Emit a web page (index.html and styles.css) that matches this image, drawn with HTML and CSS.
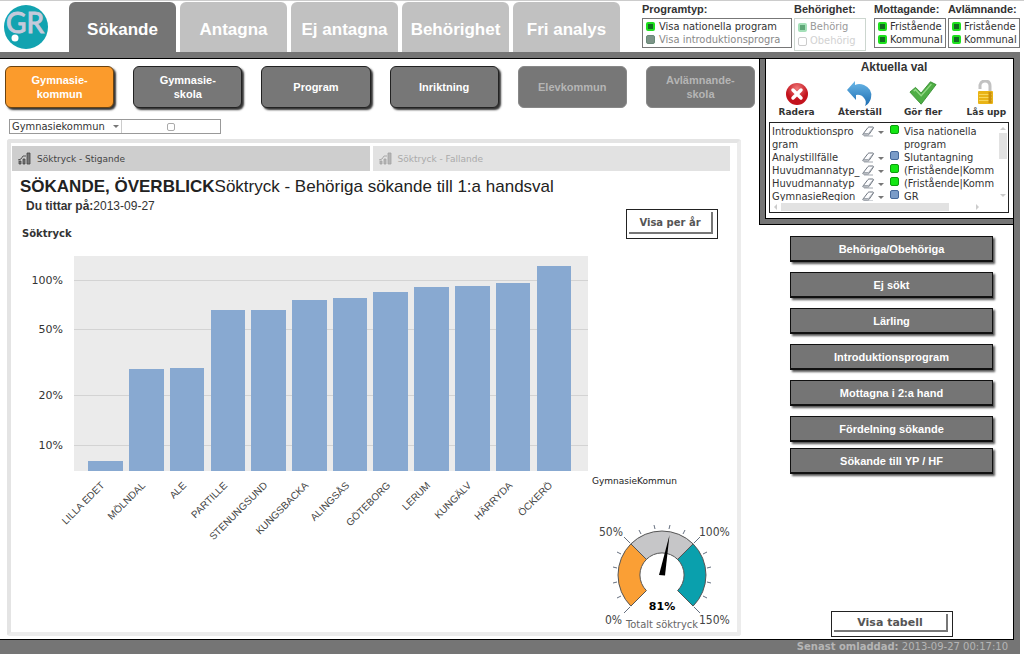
FILE: index.html
```html
<!DOCTYPE html>
<html lang="sv">
<head>
<meta charset="utf-8">
<title>Sökande, överblick</title>
<link rel="stylesheet" href="styles.css">
</head>
<body>
<svg class="defs" aria-hidden="true">
  <defs>
    <symbol id="eraser" viewBox="0 0 14 12">
      <path d="M2 9L7 2.500Q7.500 2 8.300 2H12Q13 2.300 12.300 3.300L8 9.500Q7.500 10 6.800 10H2.500Q1.300 10 2 9Z" fill="#fdfdff" stroke="#6f7680"/>
      <path d="M2 8.500H7.500L12.500 2.500M3 11H12" fill="none" stroke="#8c939c" stroke-width=".8"/>
    </symbol>
    <symbol id="minichart" viewBox="0 0 13 13">
      <path d="M1 12V9h2v3zM5 12V7h2v5zM9 12V1h3v11z" fill="#777" stroke="#444" stroke-width=".8"/>
      <path d="M0 8L3 7L5 4L8 4" stroke="#555" fill="none"/>
    </symbol>
  </defs>
</svg>
<div class="app">
  <header class="header">
    <svg class="logo" viewBox="0 0 50 50" role="img" aria-label="GR">
      <circle cx="26" cy="26" r="22" fill="#12a3b0"/>
      <text class="logo-text" x="6" y="32">GR</text>
      <circle cx="15" cy="37" r="3.500" fill="#fff"/>
    </svg>
    <nav class="tabs">
      <button class="tab tab-active">Sökande</button>
      <button class="tab">Antagna</button>
      <button class="tab">Ej antagna</button>
      <button class="tab">Behörighet</button>
      <button class="tab">Fri analys</button>
    </nav>
    <div class="filters">
      <fieldset class="filter filter-wide">
        <legend>Programtyp:</legend>
        <div class="options">
          <label><input type="checkbox" checked>Visa nationella program</label>
          <label class="muted"><input type="checkbox">Visa introduktionsprogra</label>
        </div>
      </fieldset>
      <fieldset class="filter filter-faded">
        <legend>Behörighet:</legend>
        <div class="options">
          <label><input type="checkbox" checked>Behörig</label>
          <label class="ghost"><input type="checkbox">Obehörig</label>
        </div>
      </fieldset>
      <fieldset class="filter">
        <legend>Mottagande:</legend>
        <div class="options">
          <label><input type="checkbox" checked>Fristående</label>
          <label><input type="checkbox" checked>Kommunal</label>
        </div>
      </fieldset>
      <fieldset class="filter">
        <legend>Avlämnande:</legend>
        <div class="options">
          <label><input type="checkbox" checked>Fristående</label>
          <label><input type="checkbox" checked>Kommunal</label>
        </div>
      </fieldset>
    </div>
  </header>

  <div class="frame">
    <div class="content">
      <main class="main">
        <nav class="views">
          <button class="view view-active">Gymnasie-<br>kommun</button>
          <button class="view">Gymnasie-<br>skola</button>
          <button class="view">Program</button>
          <button class="view">Inriktning</button>
          <button class="view" disabled>Elevkommun</button>
          <button class="view" disabled>Avlämnande-<br>skola</button>
        </nav>
        <div class="dimension">
          <button class="dimension-name">Gymnasiekommun <span class="arrow"></span></button>
          <span class="dimension-value"><input type="checkbox" aria-label="Gymnasiekommun"></span>
        </div>
        <section class="panel">
          <div class="charttabs">
            <button class="charttab charttab-active"><svg class="mini"><use href="#minichart"/></svg>Söktryck - Stigande</button>
            <button class="charttab"><svg class="mini"><use href="#minichart"/></svg>Söktryck - Fallande</button>
          </div>
          <h1 class="title"><b>SÖKANDE, ÖVERBLICK</b>Söktryck - Behöriga sökande till 1:a handsval</h1>
          <p class="date"><b>Du tittar på:</b>2013-09-27</p>
          <div class="body">
            <div class="chartbox">
              <h2 class="measure">Söktryck</h2>
              <svg class="chart" viewBox="12 244 576 300" role="img" aria-label="Söktryck per kommun">
                <rect x="74" y="256" width="514" height="215" fill="#ebebeb"/>
                <path d="M74 280.500H588M74 329.500H588M74 395.500H588M74 445.500H588" stroke="#d3d3d3"/>
                <g class="axis">
                  <text x="63" y="284">100%</text>
                  <text x="63" y="333">50%</text>
                  <text x="63" y="399">20%</text>
                  <text x="63" y="449">10%</text>
                </g>
                <g fill="#88a9d1">
                  <rect x="88" y="461" width="35" height="10"/>
                  <rect x="129" y="369" width="35" height="102"/>
                  <rect x="170" y="368" width="34" height="103"/>
                  <rect x="211" y="310" width="34" height="161"/>
                  <rect x="251" y="310" width="35" height="161"/>
                  <rect x="292" y="300" width="35" height="171"/>
                  <rect x="333" y="298" width="34" height="173"/>
                  <rect x="373" y="292" width="35" height="179"/>
                  <rect x="414" y="287" width="35" height="184"/>
                  <rect x="455" y="286" width="35" height="185"/>
                  <rect x="496" y="283" width="34" height="188"/>
                  <rect x="537" y="266" width="34" height="205"/>
                </g>
                <g class="names">
                  <text transform="translate(105 486) rotate(-45)">LILLA EDET</text>
                  <text transform="translate(146 486) rotate(-45)">MÖLNDAL</text>
                  <text transform="translate(187 486) rotate(-45)">ALE</text>
                  <text transform="translate(228 486) rotate(-45)">PARTILLE</text>
                  <text transform="translate(268 486) rotate(-45)">STENUNGSUND</text>
                  <text transform="translate(309 486) rotate(-45)">KUNGSBACKA</text>
                  <text transform="translate(350 486) rotate(-45)">ALINGSÅS</text>
                  <text transform="translate(391 486) rotate(-45)">GÖTEBORG</text>
                  <text transform="translate(431 486) rotate(-45)">LERUM</text>
                  <text transform="translate(472 486) rotate(-45)">KUNGÄLV</text>
                  <text transform="translate(513 486) rotate(-45)">HÄRRYDA</text>
                  <text transform="translate(553 486) rotate(-45)">ÖCKERÖ</text>
                </g>
              </svg>
            </div>
            <aside class="side">
              <button class="plain plain-year"><span>Visa per år</span></button>
              <p class="dimlabel">GymnasieKommun</p>
              <svg class="gauge" viewBox="588 520 146 112" role="img" aria-label="Totalt söktryck 81%">
                <g stroke="#555" stroke-width="1">
                  <path d="M630.900 606.100A44 44 0 0 1 630.900 543.900L646.400 559.400A22 22 0 0 0 646.400 590.600Z" fill="#fa9f35"/>
                  <path d="M630.900 543.900A44 44 0 0 1 693.100 543.900L677.600 559.400A22 22 0 0 0 646.400 559.400Z" fill="#c6c6c8"/>
                  <path d="M693.100 543.900A44 44 0 0 1 693.100 606.100L677.600 590.600A22 22 0 0 0 677.600 559.400Z" fill="#0aa0ad"/>
                </g>
                <path d="M630 543l-6-6M694 543l6-6M630 607l-6 6M694 607l6 6M617 552l4 2M613 567l4 1M613 583l4-1M617 598l4-2M639 530l2 4M654 525l1 4M670 525l-1 4M685 530l-2 4M707 552l-4 2M711 567l-4 1M711 583l-4-1M707 598l-4-2" stroke="#667080" fill="none"/>
                <path d="M659 575L669.500 535L665 575.500Z" fill="#000"/>
                <g class="scale">
                  <text x="599" y="536">50%</text>
                  <text x="699" y="536">100%</text>
                  <text x="605" y="624">0%</text>
                  <text x="699" y="624">150%</text>
                </g>
                <text class="reading" x="662" y="610">81%</text>
                <text class="caption" x="662" y="628">Totalt söktryck</text>
              </svg>
            </aside>
          </div>
        </section>
      </main>

      <aside class="sidebar">
        <section class="current">
          <div class="current-inner">
            <h2>Aktuella val</h2>
            <div class="actions">
              <button class="action">
                <svg viewBox="0 0 26 26"><defs><radialGradient id="red" cy=".25"><stop stop-color="#f07a7a"/><stop offset="1" stop-color="#c3131d"/></radialGradient></defs><circle cx="13" cy="14" r="11" fill="url(#red)"/><path d="M9 10l8 8M17 10l-8 8" stroke="#fff" stroke-width="3.500" stroke-linecap="round"/></svg>
                Radera
              </button>
              <button class="action">
                <svg viewBox="0 0 26 26"><defs><linearGradient id="blue" x2="0" y2="1"><stop stop-color="#6bb8e8"/><stop offset="1" stop-color="#1b6bb0"/></linearGradient></defs><path d="M0 10L8 1V5Q12 3 17 5Q26 9 24 18Q23 23 18 26Q20 21 17 18Q14 14 9 15L9 20Z" fill="url(#blue)"/></svg>
                Återställ
              </button>
              <button class="action">
                <svg viewBox="0 0 30 26"><path d="M1 12L7 7L13 13L23 1L29 4L13 25Z" fill="#4fae45" stroke="#3b9136"/><path d="M5 11L7 9.500L13 16L24 3.500" stroke="#92d884" stroke-width="1.500" fill="none"/></svg>
                Gör fler
              </button>
              <button class="action">
                <svg viewBox="0 0 26 26"><path d="M7 9V5Q8 1 12 1Q17 1 17 6V12" fill="none" stroke="#c2c2c2" stroke-width="3"/><rect x="5" y="11" width="15" height="13" rx="1" fill="#e9b416"/><path d="M6 14.500H19M6 17.500H19M6 20.500H19" stroke="#f8d75a"/><path d="M17 12V23" stroke="#c98f0c" stroke-width="3"/></svg>
                Lås upp
              </button>
            </div>
            <div class="listbox">
              <div class="rows">
                <table>
                  <tr><td class="name">Introduktionspro<br>gram</td><td><svg class="eraser"><use href="#eraser"/></svg></td><td><span class="arrow"></span></td><td><span class="dot dot-green"></span></td><td class="value">Visa nationella<br>program</td></tr>
                  <tr><td class="name">Analystillfälle</td><td><svg class="eraser"><use href="#eraser"/></svg></td><td><span class="arrow"></span></td><td><span class="dot"></span></td><td class="value">Slutantagning</td></tr>
                  <tr><td class="name">Huvudmannatyp_</td><td><svg class="eraser"><use href="#eraser"/></svg></td><td><span class="arrow"></span></td><td><span class="dot dot-green"></span></td><td class="value">(Fristående|Komm</td></tr>
                  <tr><td class="name">Huvudmannatyp</td><td><svg class="eraser"><use href="#eraser"/></svg></td><td><span class="arrow"></span></td><td><span class="dot dot-green"></span></td><td class="value">(Fristående|Komm</td></tr>
                  <tr><td class="name">GymnasieRegion</td><td><svg class="eraser"><use href="#eraser"/></svg></td><td><span class="arrow"></span></td><td><span class="dot"></span></td><td class="value">GR</td></tr>
                </table>
              </div>
              <div class="vscroll"><i class="up"></i><b></b><i class="down"></i></div>
              <div class="hscroll"><i class="left"></i><b></b><i class="right"></i></div>
            </div>
          </div>
        </section>
        <div class="links">
          <button class="link">Behöriga/Obehöriga</button>
          <button class="link">Ej sökt</button>
          <button class="link">Lärling</button>
          <button class="link">Introduktionsprogram</button>
          <button class="link">Mottagna i 2:a hand</button>
          <div class="linkpair">
            <button class="link">Fördelning sökande</button>
            <button class="link">Sökande till YP / HF</button>
          </div>
        </div>
        <button class="plain plain-wide"><span>Visa tabell</span></button>
      </aside>
    </div>
    <footer class="footer"><b>Senast omladdad:</b> 2013-09-27 00:17:10</footer>
  </div>
</div>
</body>
</html>
```
FILE: styles.css
```css
* { box-sizing: border-box; }
body {
  margin: 0;
  background: #fff;
  color: #333;
  font-family: "Liberation Sans", Arial, sans-serif;
  font-size: 12px;
}
button { font: inherit; color: inherit; margin: 0; padding: 0; border: 0; background: none; }
h1, h2, p { margin: 0; font-weight: normal; }
.defs { display: block; width: 0; height: 0; }
.app { display: flex; flex-direction: column; min-height: 100vh; padding-right: 4px; border-top: 1px solid #ccc; }

.header { display: flex; height: 51px; }
.logo { width: 50px; height: 50px; margin-right: 19px; flex: none; }
.logo-text { font: 28px Lato, "Open Sans", sans-serif; fill: #c5cadb; stroke: #c5cadb; stroke-width: 1px; }
.tabs { display: flex; gap: 4px; flex: 0 1 551px; padding-top: 1px; }
.tab {
  flex: 1;
  border-radius: 6px 6px 0 0;
  background: #c1c1c1;
  color: #fff;
  font-size: 17px;
  font-weight: bold;
  padding-top: 6px;
  white-space: nowrap;
}
.tab-active { background: #757575; }
.filters { display: flex; gap: 2px; margin-left: auto; }
.filter { border: 0; margin: 0; padding: 0; width: 72px; min-width: 0; }
.filter-wide { width: 150px; }
.filter-faded { margin-right: 6px; }
.filter legend { padding: 0; height: 17px; line-height: 16px; font-weight: bold; font-size: 11px; white-space: nowrap; }
.options { border: 1px solid #777; height: 30px; padding: 1px 0 0 3px; overflow: hidden; font: 11px/13px "DejaVu Sans Condensed", "Noto Sans", sans-serif; }
.options label { display: flex; align-items: center; gap: 4px; white-space: nowrap; }
.filter:not(.filter-wide) label { gap: 3px; }
.options input {
  appearance: none;
  flex: none;
  width: 9px;
  height: 9px;
  margin: 0;
  border: 1px solid #698a78;
  border-radius: 2px;
  background: #7d9488;
}
.options input:checked { border: 2px solid #1de01d; background: #126b22; }
.muted { color: #888; }
.filter-faded .options { height: 33px; border-color: #ccd6cf; color: #999; line-height: 14px; }
.filter-faded .options input:checked { border-color: #a4e0b8; background: #60a778; }
.filter-faded .ghost { color: #d2d2d2; }
.filter-faded .ghost input { background: #fff; border-color: #ccc; }

.frame { flex: 1; display: flex; flex-direction: column; background: #757575; padding: 6px 6px 0 0; }
.content { flex: 1; display: flex; background: #fff; border: 1px solid #000; border-left: 0; }
.main { flex: 1; min-width: 0; display: flex; flex-direction: column; padding: 7px 4px 3px 5px; }
.views { display: flex; gap: 19px; }
.view {
  flex: 1;
  height: 42px;
  border: 1px solid #222;
  border-radius: 6px;
  background: #777;
  box-shadow: 2px 2px 2px #333;
  color: #fff;
  font-size: 11px;
  line-height: 14px;
  font-weight: bold;
}
.view-active { background: #fb9b2c; border-color: #6a4312; }
.view:disabled { border-color: #888; box-shadow: none; color: #b5b5b5; }
.dimension {
  display: flex;
  width: 212px;
  height: 15px;
  margin: 11px 0 5px 4px;
  border: 1px solid #999;
  font: 11px/13px "DejaVu Sans Condensed", "Noto Sans", sans-serif;
}
.dimension-name { display: flex; align-items: center; justify-content: space-between; width: 112px; padding: 0 2px; border-right: 1px solid #ccc; }
.dimension-value { flex: 1; display: flex; align-items: center; justify-content: center; }
.dimension-value input { appearance: none; width: 8px; height: 8px; margin: 0; border: 1px solid #aaa; border-radius: 2px; }
.arrow { display: inline-block; border: 3px solid transparent; border-top-color: #777; border-bottom: 0; }

.panel {
  flex: 1;
  display: flex;
  flex-direction: column;
  margin: 0 14px 0 2px;
  padding: 3px 3px 0 1px;
  border: 4px solid #e4e4e4;
  border-right-color: #ececec;
  border-bottom-color: #ececec;
  border-radius: 3px;
}
.charttabs { display: flex; gap: 3px; margin-right: 4px; }
.charttab {
  flex: 1;
  display: flex;
  align-items: center;
  gap: 6px;
  height: 25px;
  padding-left: 6px;
  background: #e2e2e2;
  color: #aaa;
  font: 9px/12px "DejaVu Sans", sans-serif;
}
.charttab-active { background: #cecece; color: #444; }
.charttab:not(.charttab-active) .mini { opacity: .4; }
.mini { width: 13px; height: 13px; }
.title { margin: 6px 0 0 8px; font-size: 17px; line-height: 20px; color: #222; white-space: nowrap; }
.date { margin: 3px 0 0 14px; font-size: 12px; line-height: 12px; }
.body { flex: 1; display: flex; }
.chartbox { flex: 576; min-width: 0; padding-top: 15px; }
.measure { margin: 0 0 3px 10px; font: bold 10px/14px "DejaVu Sans", sans-serif; }
.chart { display: block; width: 100%; }
.axis { font: 11px "DejaVu Sans", sans-serif; text-anchor: end; fill: #333; }
.names { font-size: 10px; text-anchor: end; fill: #444; }
.side { flex: 146; display: flex; flex-direction: column; margin-top: -3px; }
.plain {
  width: 92px;
  height: 30px;
  padding: 2px 4px 4px 2px;
  border: 1px solid #222;
  color: #555;
  font: bold 10px "DejaVu Sans", sans-serif;
}
.plain span { display: flex; height: 100%; align-items: center; justify-content: center; border: solid #777; border-width: 0 2px 2px 0; }
.plain-year { align-self: flex-end; margin-right: 16px; }
.dimlabel { margin: auto 0 32px 4px; font: 9px/14px "DejaVu Sans", sans-serif; color: #222; }
.gauge { display: block; width: 100%; }
.scale { font: 12px "DejaVu Sans Condensed", "DejaVu Sans", sans-serif; fill: #444; }
.reading { font: bold 11px "DejaVu Sans", sans-serif; text-anchor: middle; fill: #000; }
.caption { font: 11px "DejaVu Sans Condensed", "Noto Sans", sans-serif; text-anchor: middle; fill: #666; }

.sidebar { flex: none; width: 254px; display: flex; flex-direction: column; }
.current { border: solid #000; border-width: 0 0 1px 1px; background: #757575; padding: 0 0 5px 5px; }
.current-inner { background: #fff; border: solid #000; border-width: 0 0 1px 1px; padding: 0 4px 5px 3px; }
.current h2 { text-align: center; font: bold 12px/17px "Liberation Sans", sans-serif; padding-left: 10px; }
.actions { display: flex; padding: 4px 0; margin: 0 -9px 0 -4px; }
.action { flex: 1; display: flex; flex-direction: column; align-items: center; font: bold 9px/12px "DejaVu Sans", sans-serif; white-space: nowrap; }
.action svg { width: 28px; height: 26px; }
.listbox { display: grid; grid-template: 78px 11px / 1fr 11px; border: 1px solid #222; }
.rows { overflow: hidden; font: 11px/13px "DejaVu Sans Condensed", "Noto Sans", sans-serif; }
.rows table { border-spacing: 0; table-layout: fixed; width: 260px; margin-top: 2px; }
.rows td { padding: 0; height: 13px; vertical-align: top; width: 17px; white-space: nowrap; }
.rows .name { width: 91px; padding-left: 2px; overflow: hidden; }
.rows .value { width: auto; padding-left: 1px; }
.rows td:nth-child(3) { width: 11px; padding-top: 4px; line-height: 4px; }
.rows td:nth-child(4) { width: 14px; padding-left: 1px; line-height: 0; }
.eraser { display: block; width: 14px; height: 12px; }
.dot { display: inline-block; width: 9px; height: 9px; border: 1px solid #46699b; border-radius: 2px; background: #7b9cc8; }
.dot-green { border-color: #0c9c0c; background: #13e613; }
.vscroll { display: flex; flex-direction: column; align-items: center; padding: 4px 0; }
.vscroll b { width: 8px; height: 26px; margin: 3px 0 auto; background: #e2e2e2; }
.hscroll { display: flex; align-items: center; padding: 0 4px; }
.hscroll b { width: 168px; height: 8px; margin: 0 auto 0 4px; background: #e2e2e2; }
.hscroll .right { margin-right: 14px; }
.up, .down, .left, .right { border: 3px solid transparent; }
.up { border-bottom-color: #ccc; border-top: 0; }
.down { border-top-color: #ccc; border-bottom: 0; }
.left { border-right-color: #ccc; border-left: 0; }
.right { border-left-color: #ccc; border-right: 0; }
.links { display: flex; flex-direction: column; gap: 10px; padding: 11px 20px 0 31px; }
.linkpair { display: flex; flex-direction: column; gap: 6px; }
.link { height: 26px; border: 1px solid #111; border-bottom-width: 2px; background: #757575; box-shadow: 2px 2px 2px #555; color: #fff; font-size: 11px; font-weight: bold; }
.plain-wide { align-self: center; width: 122px; height: 26px; margin: auto 0 2px 12px; font-size: 11px; }
.footer { height: 14px; padding-right: 6px; text-align: right; font: 10px/14px "DejaVu Sans", sans-serif; color: #b5b5b5; }
```
